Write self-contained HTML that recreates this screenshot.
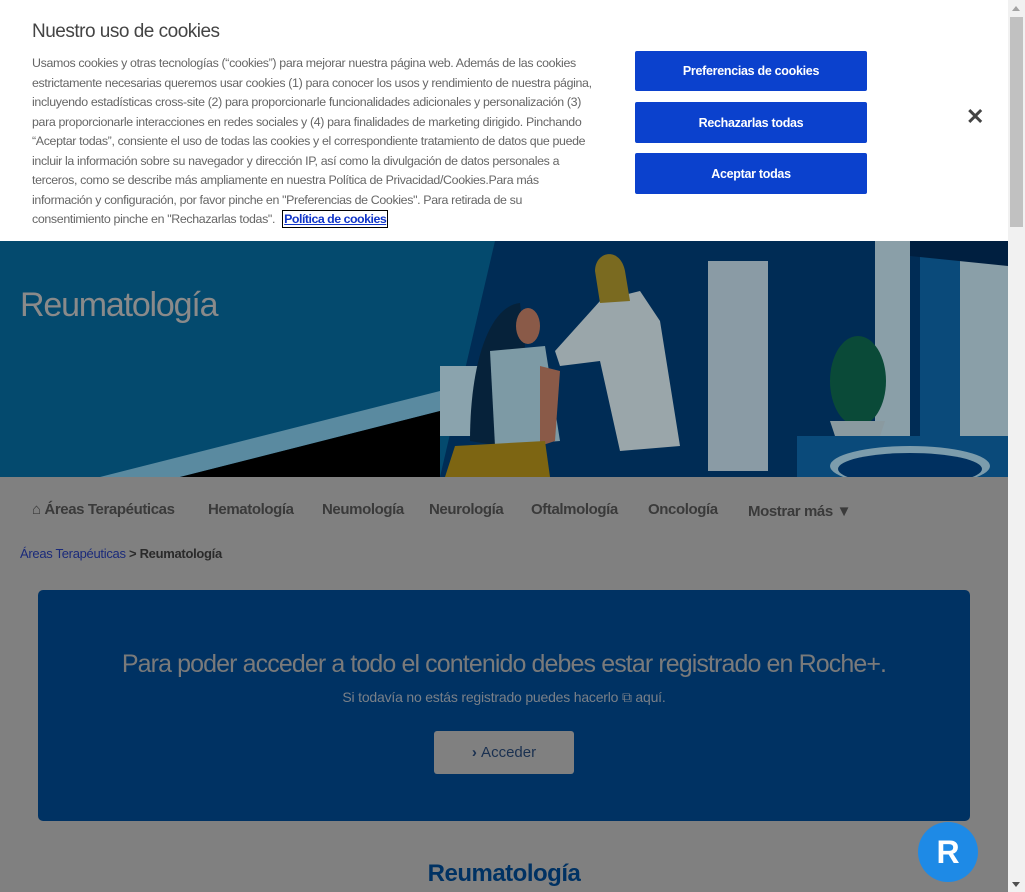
<!DOCTYPE html>
<html><head><meta charset="utf-8"><style>
*{margin:0;padding:0;box-sizing:border-box}
body{width:1025px;height:892px;overflow:hidden;background:#808080;font-family:"Liberation Sans",sans-serif;position:relative}
.abs{position:absolute}
#banner{left:0;top:0;width:1008px;height:241px;background:#fff}
#banner h2{position:absolute;left:32px;top:21px;font-size:19px;font-weight:normal;color:#444;letter-spacing:-0.5px}
#banner p{position:absolute;left:32px;top:54px;font-size:12.4px;line-height:19.5px;color:#666;white-space:nowrap;letter-spacing:-0.35px}
#banner a{color:#1034c8;font-weight:bold;text-decoration:underline;border:1px solid #000;padding:1px 1px;margin-left:4px;letter-spacing:-0.5px}
.btn{position:absolute;left:635px;width:232px;height:41px;background:#0b41cd;color:#fff;font-weight:bold;font-size:12.5px;letter-spacing:-0.3px;display:flex;align-items:center;justify-content:center;border-radius:2px}
#sb{left:1008px;top:0;width:17px;height:892px;background:#f1f1f1}
nav span{position:absolute;top:501px;font-weight:bold;font-size:15px;color:#3a3a3a;letter-spacing:-0.4px}
</style></head><body>
<div class="abs" style="left:0;top:241px;width:1008px;height:236px;background:#034a6e;overflow:hidden">
<svg width="1008" height="236" viewBox="0 0 1008 236">
<rect x="0" y="0" width="1008" height="236" fill="#044a6e"/>
<polygon points="495,0 1008,0 1008,236 440,236" fill="#002c55"/>
<polygon points="100,236 440,150 440,170 180,236" fill="#5a8aa0"/>
<polygon points="180,236 440,170 440,236" fill="#000"/>
<rect x="440" y="125" width="70" height="70" fill="#8aa3ad"/>
<rect x="875" y="0" width="35" height="236" fill="#8a9fa8"/>
<rect x="920" y="0" width="40" height="200" fill="#0a4a7a"/>
<rect x="960" y="20" width="48" height="190" fill="#8a9fa8"/>
<polygon points="910,0 1008,0 1008,25 910,15" fill="#001f40"/>
<rect x="708" y="20" width="60" height="210" fill="#8a9ba5"/>
<rect x="797" y="195" width="211" height="41" fill="#0a4a7a"/>
<ellipse cx="910" cy="225" rx="80" ry="20" fill="#7c9cac"/><ellipse cx="910" cy="228" rx="72" ry="16" fill="#003060"/>
<path d="M470 200 C 470 120 490 65 520 62 L 530 150 L 500 205Z" fill="#06223a"/>
<path d="M490 110 L545 105 L560 200 L495 205Z" fill="#7d9aa5"/>
<ellipse cx="528" cy="85" rx="12" ry="18" fill="#8a5a48"/>
<path d="M540 125 L560 130 L555 200 L540 205Z" fill="#8a5a48"/>
<path d="M445 236 L455 205 L545 200 L550 236Z" fill="#7d6512"/>
<path d="M600 60 L640 50 L660 80 L680 205 L620 210 L600 120 L560 125 L555 110Z" fill="#9aa6aa"/>
<path d="M595 30 C595 10 620 5 625 30 L630 60 L600 62Z" fill="#7a6a20"/>
<ellipse cx="858" cy="140" rx="28" ry="45" fill="#0a4a38"/>
<path d="M830 180 L885 180 L880 195 L835 195Z" fill="#8a9aa0"/>
</svg>
<div class="abs" style="left:20px;top:45px;font-size:34px;color:#8a8a8a;letter-spacing:-1.2px">Reumatología</div>
</div>
<nav>
<span style="left:32px">⌂ Áreas Terapéuticas</span>
<span style="left:208px">Hematología</span>
<span style="left:322px">Neumología</span>
<span style="left:429px">Neurología</span>
<span style="left:531px">Oftalmología</span>
<span style="left:648px">Oncología</span>
<span style="left:748px;top:503px">Mostrar más ▼</span>
</nav>
<div class="abs" style="left:20px;top:546px;font-size:13px;color:#1a2a7a;letter-spacing:-0.3px">Áreas Terapéuticas <b style="color:#2a2a2a">&gt; Reumatología</b></div>
<div class="abs" style="left:38px;top:590px;width:932px;height:231px;background:#003263;border-radius:5px">
<div class="abs" style="left:0;width:932px;top:60px;text-align:center;font-size:25px;color:#7a7a7a;letter-spacing:-0.9px">Para poder acceder a todo el contenido debes estar registrado en Roche+.</div>
<div class="abs" style="left:0;width:932px;top:99px;text-align:center;font-size:14px;color:#7a8088;letter-spacing:-0.2px">Si todavía no estás registrado puedes hacerlo ⧉ aquí.</div>
<div class="abs" style="left:396px;top:141px;width:140px;height:43px;background:#808080;border-radius:3px;color:#1a3050;font-size:15px;display:flex;align-items:center;justify-content:center"><b>›</b>&nbsp;Acceder</div>
</div>
<div class="abs" style="left:0;width:1008px;top:860px;text-align:center;font-size:24px;font-weight:bold;color:#003263;letter-spacing:-0.5px">Reumatología</div>
<div class="abs" style="left:918px;top:822px;width:60px;height:60px;border-radius:50%;background:#1e8ae6;color:#fff;font-size:32px;font-weight:bold;display:flex;align-items:center;justify-content:center">R</div>
<div id="banner" class="abs">
<h2>Nuestro uso de cookies</h2>
<p>Usamos cookies y otras tecnologías (“cookies”) para mejorar nuestra página web. Además de las cookies<br>estrictamente necesarias queremos usar cookies (1) para conocer los usos y rendimiento de nuestra página,<br>incluyendo estadísticas cross-site (2) para proporcionarle funcionalidades adicionales y personalización (3)<br>para proporcionarle interacciones en redes sociales y (4) para finalidades de marketing dirigido. Pinchando<br>“Aceptar todas”, consiente el uso de todas las cookies y el correspondiente tratamiento de datos que puede<br>incluir la información sobre su navegador y dirección IP, así como la divulgación de datos personales a<br>terceros, como se describe más ampliamente en nuestra Política de Privacidad/Cookies.Para más<br>información y configuración, por favor pinche en "Preferencias de Cookies". Para retirada de su<br>consentimiento pinche en "Rechazarlas todas". <a>Política de cookies</a></p>
<div class="btn" style="top:51px;height:40px">Preferencias de cookies</div>
<div class="btn" style="top:102px">Rechazarlas todas</div>
<div class="btn" style="top:153px">Aceptar todas</div>
<div class="abs" style="left:966px;top:104px;font-size:22px;font-weight:bold;color:#444">✕</div>
</div>
<div id="sb" class="abs"><div class="abs" style="left:2px;top:17px;width:13px;height:210px;background:#c1c1c1"></div>
<div class="abs" style="left:4px;top:6px;border:4px solid transparent;border-bottom:5px solid #a3a3a3;border-top:0"></div>
<div class="abs" style="left:4px;top:882px;border:4px solid transparent;border-top:5px solid #505050;border-bottom:0"></div></div>
</body></html>
